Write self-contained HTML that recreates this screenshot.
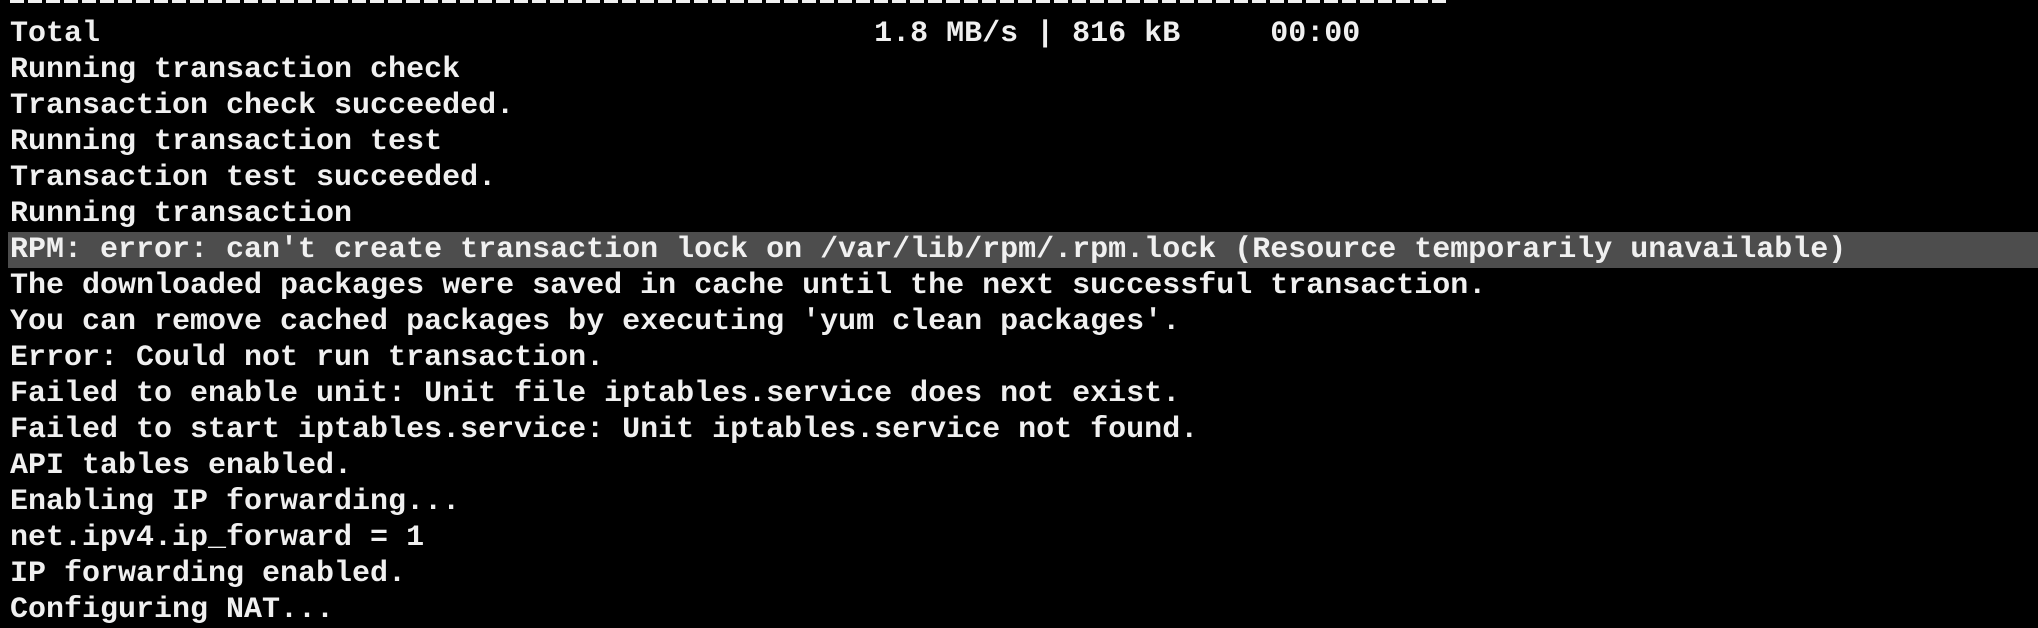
<!DOCTYPE html>
<html><head><style>
html,body{margin:0;padding:0;background:#000;width:2038px;height:610px;overflow:hidden}
pre{margin:0;position:absolute;left:10px;top:-20px;font-family:"Liberation Mono",monospace;font-weight:bold;font-size:30px;line-height:36px;color:#f0f0f0;white-space:pre}
.hl{position:absolute;left:8px;right:0;top:232px;height:36px;background:#4d4d4d}
.dash{position:absolute;left:10px;top:0;width:1440px;height:3px;background:repeating-linear-gradient(90deg,#f0f0f0 0 14px,transparent 14px 18px)}
</style></head><body>
<div class="hl"></div>
<div class="dash"></div>
<pre> 
Total                                           1.8 MB/s | 816 kB     00:00
Running transaction check
Transaction check succeeded.
Running transaction test
Transaction test succeeded.
Running transaction
RPM: error: can't create transaction lock on /var/lib/rpm/.rpm.lock (Resource temporarily unavailable)
The downloaded packages were saved in cache until the next successful transaction.
You can remove cached packages by executing 'yum clean packages'.
Error: Could not run transaction.
Failed to enable unit: Unit file iptables.service does not exist.
Failed to start iptables.service: Unit iptables.service not found.
API tables enabled.
Enabling IP forwarding...
net.ipv4.ip_forward = 1
IP forwarding enabled.
Configuring NAT...</pre>
</body></html>
